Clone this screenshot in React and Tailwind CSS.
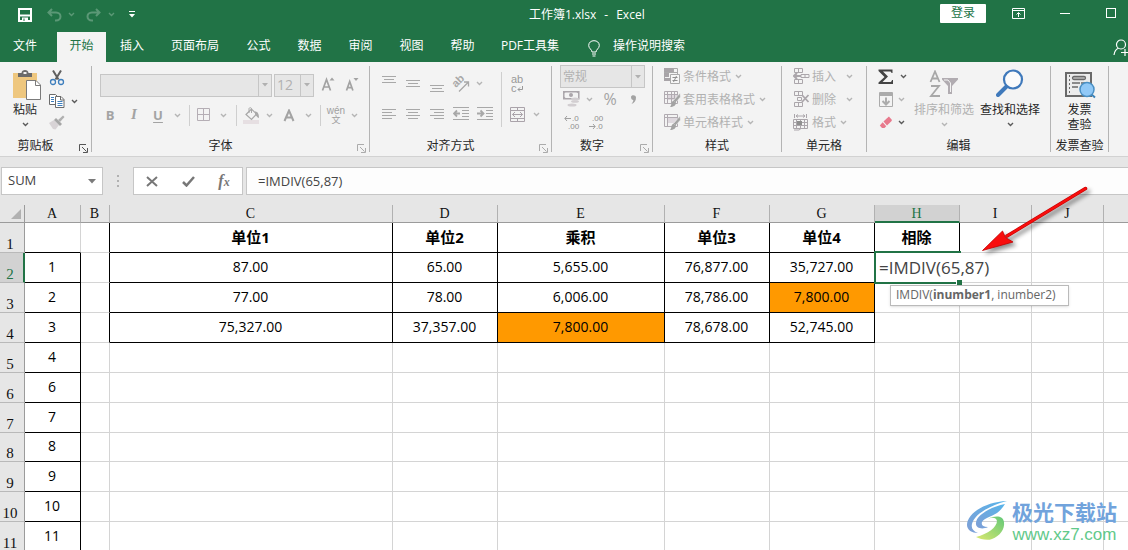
import { useState } from "react";
import clsx from "clsx";

const TABS = [
  { name: "文件", width: "w-[50px] mr-[7px]" },
  { name: "开始", width: "w-[49px] mr-px", active: true },
  { name: "插入", width: "w-[50px]" },
  { name: "页面布局", width: "w-[76px]" },
  { name: "公式", width: "w-[51px]" },
  { name: "数据", width: "w-[51px]" },
  { name: "审阅", width: "w-[51px]" },
  { name: "视图", width: "w-[51px]" },
  { name: "帮助", width: "w-[51px]" },
  { name: "PDF工具集", width: "w-[84px]" },
];

const COLUMNS = [
  { name: "A", width: "w-[56px]" },
  { name: "B", width: "w-[29px]" },
  { name: "C", width: "w-[283px]" },
  { name: "D", width: "w-[105px]" },
  { name: "E", width: "w-[167px]" },
  { name: "F", width: "w-[105px]" },
  { name: "G", width: "w-[105px]" },
  { name: "H", width: "w-[85px]" },
  { name: "I", width: "w-[72px]" },
  { name: "J", width: "w-[72px]" },
  { name: "", width: "" },
];

const ROWS = [
  ["", "", "单位1", "单位2", "乘积", "单位3", "单位4", "相除"],
  ["1", "", "87.00", "65.00", "5,655.00", "76,877.00", "35,727.00"],
  ["2", "", "77.00", "78.00", "6,006.00", "78,786.00", "7,800.00"],
  ["3", "", "75,327.00", "37,357.00", "7,800.00", "78,678.00", "52,745.00"],
  ["4"],
  ["6"],
  ["7"],
  ["8"],
  ["9"],
  ["10"],
  ["11"],
];

const HIGHLIGHTED = ["G3", "E4"];

/* ---------- small pieces ---------- */

const Chevron = ({ dark, className }) => (
  <svg
    width="7"
    height="5"
    viewBox="0 0 7 5"
    fill="none"
    stroke={dark ? "#5a5a5a" : "#b5b5b5"}
    strokeWidth="1.4"
    className={clsx("shrink-0", className)}
  >
    <path d="M1 1l2.500 2.500L6 1" />
  </svg>
);

const IconButton = ({ label, className, children, enabled }) => (
  <button
    type="button"
    aria-label={label}
    disabled={!enabled}
    className={clsx("flex h-6 shrink-0 items-center justify-center", className)}
  >
    {children}
  </button>
);

const More = ({ className = "w-[14px]", dark }) => (
  <IconButton label="更多" className={className} enabled={dark}>
    <Chevron dark={dark} />
  </IconButton>
);

const Divider = ({ className }) => (
  <div className={clsx("flex h-[21px] shrink-0 justify-center", className)}>
    <div className="w-px bg-[#cfcfcf]" />
  </div>
);

const Combo = ({ label, value, className }) => (
  <div className={clsx("flex h-[23px] shrink-0 border border-[#c6c6c6] bg-[#e6e6e6]", className)}>
    <select
      aria-label={label}
      disabled
      className="min-w-0 flex-1 appearance-none pl-0.5 leading-5 text-[#b1b1b1] opacity-100"
    >
      <option>{value}</option>
    </select>
    <div className="flex w-[13px] items-center justify-center border-l border-[#c6c6c6]">
      <svg width="6" height="4" viewBox="0 0 6 4" fill="#b1b1b1">
        <path d="M0 0h6L3 3.500z" />
      </svg>
    </div>
  </div>
);

const Group = ({ name, launcher, darkLauncher, className, children }) => (
  <section
    aria-label={name}
    className={clsx("relative flex h-[94px] shrink-0 flex-col pr-px", className)}
  >
    <div className="h-[76px]">{children}</div>
    <div className="flex h-4 items-center">
      <h2 className="flex-1 text-center text-xs leading-4 text-[#262626]">{name}</h2>
      {launcher && (
        <button type="button" aria-label={name + "设置"} className="flex w-5 items-end justify-end pt-[4px] pr-[3px]">
          <svg width="9" height="9" viewBox="0 0 9 9" fill="none" stroke={darkLauncher ? "#555" : "#ababab"}>
            <path d="M.5 7V.5H7M3 3l4.500 4.500M8.500 4v4.500H4" />
          </svg>
        </button>
      )}
    </div>
    <div className="absolute top-1 right-0 h-[86px] w-px bg-[#b4b4b4]" />
  </section>
);

/* ---------- icons ---------- */

const PasteIcon = () => (
  <svg width="30" height="32" viewBox="0 0 30 32" className="ml-1 shrink-0">
    <path d="M1 4h24v25H1z" fill="#eec77f" />
    <path d="M6 8V4h3.500c0-4 7-4 7 0H20v4z" fill="#6b6b6b" />
    <rect x="11.500" y="3" width="3" height="2" fill="#f3f3f3" />
    <path d="M14.500 11.500h9.500l4.500 4.500v14.500h-14z" fill="#fff" stroke="#7b7b7b" />
    <path d="M23.500 11.500v5h5" fill="none" stroke="#7b7b7b" />
  </svg>
);

const CutIcon = () => (
  <svg width="16" height="16" viewBox="0 0 16 16" fill="none">
    <path d="M4 .5l5.500 9M12 .5l-5.500 9" stroke="#5f5f5f" strokeWidth="2" />
    <circle cx="4" cy="12" r="2.500" stroke="#3d7ebd" strokeWidth="1.300" />
    <circle cx="12" cy="12" r="2.500" stroke="#3d7ebd" strokeWidth="1.300" />
  </svg>
);

const CopyIcon = () => (
  <svg width="16" height="16" viewBox="0 0 16 16" fill="none">
    <path d="M.5 1.500h6l2 2v8h-8z" fill="#fff" stroke="#6b6b6b" />
    <path d="M2 4.500h3M2 6.500h3M2 8.500h3" stroke="#3d7ebd" />
    <path d="M6.500 3.500h5.500l3 3v8H6.500z" fill="#fff" stroke="#6b6b6b" />
    <path d="M11.500 3.500V7H15" stroke="#6b6b6b" />
    <path d="M8.500 8.500h5M8.500 10.500h5M8.500 12.500h5" stroke="#3d7ebd" />
  </svg>
);

const PainterIcon = () => (
  <svg width="16" height="16" viewBox="0 0 16 16">
    <path d="M0 8l5-3 5 5-3.500 4.500-2.500-.5z" fill="#d8d3d6" />
    <path d="M5 5l2-2 6 6-2 2z" fill="#a6a6a6" />
    <path d="M9 5l5-4.500L15.500 2 11 7z" fill="#b0b0b0" />
  </svg>
);

const GrowFontIcon = ({ shrink }) => (
  <svg width="14" height="16" viewBox="0 0 14 16" fill="none">
    {shrink ? (
      <path d="M1.500 13.500l3.200-9 3.200 9M2.700 10.700h4" stroke="#a3a3a3" strokeWidth="1.700" />
    ) : (
      <path d="M1.500 13.500l4-11 4 11M3 10h5" stroke="#a3a3a3" strokeWidth="1.700" />
    )}
    <path d={shrink ? "M8.500 1h5L11 4z" : "M8.500 3.500h5L11 .5z"} fill="#a3a3a3" />
  </svg>
);

const BordersIcon = () => (
  <svg width="14" height="14" viewBox="0 0 14 14" fill="none" stroke="#b5aeb5">
    <path d="M.5.5h12v12H.5zM6.500.5v12M.5 6.500h12" />
  </svg>
);

const FillIcon = () => (
  <svg width="17" height="17" viewBox="0 0 17 17" fill="none">
    <path d="M0 13h16v4H0z" fill="#e6dfe2" />
    <path d="M3 7.500L8.500 2l5 5-5 5.500z" stroke="#a8a8a8" strokeWidth="1.200" />
    <path d="M6 6V1.500c0-1 2.500-1 2.500 0V6" stroke="#a8a8a8" />
    <path d="M12 4.500c2.500 0 4 2 4 6.500-2-.5-2.500-2-4-4z" fill="#a8a8a8" />
  </svg>
);

const FontColorIcon = () => (
  <svg width="12" height="13" viewBox="0 0 12 13" fill="none" stroke="#a3a3a3" strokeWidth="2">
    <path d="M1.500 12L6 1.500 10.500 12M3 8.500h6" />
  </svg>
);

// line lists are [x, width] pairs stacked three pixels apart
const ALIGNMENTS = {
  even: [[0, 14], [2, 10], [0, 14]],
  left: [[0, 14], [0, 10], [0, 14], [0, 10]],
  center: [[0, 14], [2, 10], [0, 14], [2, 10]],
  right: [[0, 14], [4, 10], [0, 14], [4, 10]],
};

const LinesIcon = ({ kind, className }) => {
  const lines = ALIGNMENTS[kind];
  return (
    <svg width="14" height={lines.length * 3} className={className} fill="#a8a8a8">
      {lines.map(([x, w], i) => (
        <rect key={i} x={x} y={i * 3 + 1} width={w} height="1" />
      ))}
    </svg>
  );
};

const IndentIcon = ({ right }) => (
  <svg width="16" height="14" viewBox="0 0 16 14" fill="none" stroke="#a8a8a8">
    <path d="M0 .5h16M9 3.500h7M9 6.500h7M9 9.500h7M0 12.500h16" />
    {right ? (
      <path d="M0 6.500h6M3.500 3.500l3 3-3 3" strokeWidth="1.800" />
    ) : (
      <path d="M7 6.500H1M4 3.500l-3 3 3 3" strokeWidth="1.800" />
    )}
  </svg>
);

const OrientationIcon = () => (
  <svg width="20" height="20" viewBox="0 0 20 20" fill="none" stroke="#a8a8a8" className="overflow-visible">
    <text
      x="5"
      y="14"
      fontSize="11"
      fontWeight="bold"
      transform="rotate(-45 5 14)"
      fill="#a8a8a8"
      stroke="none"
      fontFamily="Liberation Sans"
    >
      ab
    </text>
    <path d="M8 17.500L17 8.500M13 8h4.500v4.500" strokeWidth="1.300" />
  </svg>
);

const WrapIcon = () => (
  <svg width="14" height="20" viewBox="0 0 14 20" fill="none" className="overflow-visible">
    <text fontSize="11" fill="#999" fontFamily="Liberation Sans">
      <tspan x="1" y="9">ab</tspan>
      <tspan x="1" y="18">c</tspan>
    </text>
    <path d="M12.500 12v3.500H8M10 13.500l-2 2 2 2" stroke="#999" />
  </svg>
);

const MergeIcon = () => (
  <svg width="15" height="15" viewBox="0 0 15 15" fill="none" stroke="#aaa3aa">
    <path d="M.5.5h14v14H.5zM.5 3.500h14M.5 11.500h14M7.500.5v3M7.500 11.500v3" />
    <path d="M2.500 7.500h10M5 5L2.500 7.500 5 10M10 5l2.500 2.500L10 10" />
  </svg>
);

const MoneyIcon = () => (
  <svg width="17" height="16" viewBox="0 0 17 16">
    <path d="M.8.8h15v7H.8z" fill="#f3f3f3" stroke="#aba6ab" strokeWidth="1.500" />
    <path d="M0 0h4L0 3zM16 0h-4l4 3zM0 8h4L0 5z" fill="#aba6ab" />
    <circle cx="8" cy="4" r="2" fill="#aba6ab" />
    <ellipse cx="12" cy="8" rx="4" ry="1.500" fill="#d2ced1" />
    <ellipse cx="12" cy="10.500" rx="4" ry="1.300" fill="#d2ced1" />
    <ellipse cx="9" cy="14" rx="4.500" ry="1.500" fill="#d2ced1" />
  </svg>
);

const DecimalIcon = ({ increase }) => (
  <svg width="17" height="16" viewBox="0 0 17 16" fill="none" className="overflow-visible">
    <text fontSize="8" fill="#8f8f8f" fontFamily="Liberation Sans">
      <tspan x={increase ? 8 : 4} y="7">{increase ? ".0" : ".00"}</tspan>
      <tspan x={increase ? 4 : 8} y="15">{increase ? ".00" : ".0"}</tspan>
    </text>
    <path d={increase ? "M7 4.500H1M3 2L.8 4.500 3 7" : "M1 12.500h6M5 10l2.200 2.500L5 15"} stroke="#a0a0a0" />
  </svg>
);

const ConditionalIcon = () => (
  <svg width="17" height="17" viewBox="0 0 17 17" fill="none">
    <path d="M.5.5h13v12H.5z" fill="#f3f3f3" stroke="#aaa" />
    <path d="M0 0h9v4H0zM0 5h5v4H0zM0 10h6v3H0z" fill="#a8a4a8" />
    <path d="M9.500.5v4M0 4.500h13" stroke="#aaa" />
    <path d="M6.500 6.500h9v9h-9z" fill="#f6f6f6" stroke="#aaa" />
    <path d="M8.500 9.500h5M8.500 12.500h5M12.500 8l-3 6" stroke="#8f8f8f" />
  </svg>
);

const TableStyleIcon = ({ cell }) => (
  <svg width="17" height="17" viewBox="0 0 17 17" fill="none">
    <path d="M4 4h9v5H4z" fill="#ded8de" />
    <path d="M.5.5h13v12H.5zM.5 3.500h13M3.500.5v12" stroke="#b1abb1" />
    {!cell && <path d="M.5 7.500h13M7.500.5v12M10.500.5v12" stroke="#b1abb1" />}
    <path d="M16 2l.5 4-5 5.500-2-2z" fill="#a3a3a3" stroke="#f3f3f3" strokeWidth=".6" />
    <path d="M9.500 9.500l2.500 2c0 3-2.500 4.500-6 4.500 2-1.500.5-5 3.500-6.500z" fill="#a3a3a3" />
  </svg>
);

const InsertCellsIcon = () => (
  <svg width="17" height="17" viewBox="0 0 17 17" fill="none" stroke="#aba6ab">
    <path d="M1.500.5h8v4h-8zM5.500.5v4M1.500 11.500h8v4h-8zM5.500 11.500v4" />
    <path d="M8 6.500h8v3H8zM12 6.500v3" />
    <path d="M8 8H1M4 5L1 8l3 3" strokeWidth="2" />
  </svg>
);

const DeleteCellsIcon = () => (
  <svg width="17" height="17" viewBox="0 0 17 17" fill="none" stroke="#aba6ab">
    <path d="M1.500.5h8v4h-8zM5.500.5v4M1.500 11.500h8v4h-8zM5.500 11.500v4M4.500 6.500h4v3h-4z" />
    <path d="M9 4l6.500 7M15.500 4L9 11" strokeWidth="1.800" />
  </svg>
);

const FormatCellsIcon = () => (
  <svg width="16" height="17" viewBox="0 0 16 17" fill="none" stroke="#aba6ab">
    <path d="M1.500 0v4M13.500 0v4M3 2h9M5 .5L3 2l2 1.500M10 .5L12 2l-2 1.500" />
    <path d="M.5 5.500h14v9H.5zM.5 8.500h14M.5 11.500h14M3.500 5.500v9M7.500 5.500v9M11.500 5.500v9" />
    <path d="M4 7h5v4H4z" fill="#8f8f8f" stroke="none" />
    <path d="M1 16h5l2-1.500" />
  </svg>
);

const SigmaIcon = () => (
  <svg width="16" height="16" viewBox="0 0 16 16" fill="#444">
    <path d="M.5.5h14V4h-1c-.3-1.200-.8-1.500-2-1.500H5L10 7.500 4.500 13H12c1.200 0 1.600-.6 2-2h1v4H.5v-1.500L6.500 8 .5 2z" />
  </svg>
);

const FillDownIcon = () => (
  <svg width="14" height="16" viewBox="0 0 14 16" fill="none" stroke="#ababab">
    <path d="M.5.5h13v14H.5z" />
    <path d="M0 1h14v3H0z" fill="#ababab" stroke="none" />
    <path d="M7 5.500v7M3.500 9L7 12.500 10.500 9" strokeWidth="2" />
  </svg>
);

const EraserIcon = () => (
  <svg width="14" height="14" viewBox="0 0 14 14">
    <path d="M4.500 5.500L9 1.200c.6-.5 1-.5 1.600 0l2 2.300c.4.500.4 1 0 1.500L8 9.500z" fill="#e8798c" />
    <path d="M3.700 6.300l3.500 4L5.500 12H3L.8 9.500z" fill="#e8798c" />
  </svg>
);

const SortFilterIcon = () => (
  <svg width="30" height="28" viewBox="0 0 30 28" fill="none" stroke="#a8a8a8">
    <path d="M1.500 12L6 1.500 10.500 12M3 8.500h6" strokeWidth="1.800" />
    <path d="M2 16h8L2 26h9" strokeWidth="1.800" />
    <path d="M13 8h16v1.500l-6 6.500v8h-4v-8l-6-6.500z" fill="#b1acb1" stroke="none" />
    <path d="M15 10h4l2.500 3v9" stroke="#f3f3f3" />
  </svg>
);

const SearchIcon = () => (
  <svg width="28" height="28" viewBox="0 0 28 28" fill="none">
    <path d="M2 26L11 17" stroke="#3f79bb" strokeWidth="4" strokeLinecap="round" />
    <circle cx="17" cy="10.500" r="9" fill="#fbfbfb" stroke="#3f79bb" strokeWidth="2.200" />
  </svg>
);

const InvoiceIcon = () => (
  <svg width="32" height="28" viewBox="0 0 32 28" fill="none">
    <path d="M2 2h25v23H2z" fill="#ececec" stroke="#6a6a6a" strokeWidth="2" />
    <path d="M5.500 4v19" stroke="#6a6a6a" strokeDasharray="2 2" />
    <rect x="8.500" y="5.500" width="13" height="3" rx="1.500" fill="#bbb" stroke="#6a6a6a" strokeWidth="1.300" />
    <path d="M8 12h8M8 16h6M17 12h4" stroke="#6a6a6a" strokeWidth="1.300" />
    <path d="M27 23l4 3.500" stroke="#3c83b8" strokeWidth="2" />
    <circle cx="23" cy="18.500" r="7" fill="#91c9f7" stroke="#4a90c4" strokeWidth="1.500" />
  </svg>
);

/* ---------- title bar and tabs ---------- */

const TitleBar = () => (
  <header className="flex h-8 items-center text-xs text-white">
    <div className="flex w-[529px] shrink-0 items-center pb-[3px] pl-[13px]">
      <IconButton label="保存" enabled className="w-6">
        <svg width="14" height="14" viewBox="0 0 14 14" fill="none" stroke="#fff">
          <path d="M1 1h12v12H1z" strokeWidth="2" />
          <path d="M2 7.500h10" strokeWidth="2" />
          <path d="M4 9.500h6V13H4z" fill="#fff" stroke="none" />
          <path d="M5.500 10.500h1V13h-1z" fill="#217346" stroke="none" />
        </svg>
      </IconButton>
      <IconButton label="撤消" className="ml-[5px] w-6">
        <svg width="15" height="14" viewBox="0 0 15 14" fill="none" stroke="#5b9876" strokeWidth="2">
          <path d="M5 1L1.500 4.500 5 8M2 4.500h7c6 0 6 8 0 8H8" />
        </svg>
      </IconButton>
      <svg width="7" height="5" viewBox="0 0 7 5" fill="none" stroke="#5b9876" strokeWidth="1.400" className="ml-0.5">
        <path d="M1 1l2.500 2.500L6 1" />
      </svg>
      <IconButton label="恢复" className="ml-[6px] w-6">
        <svg width="15" height="14" viewBox="0 0 15 14" fill="none" stroke="#5b9876" strokeWidth="2">
          <path d="M10 1l3.500 3.500L10 8M13 4.500H6c-6 0-6 8 0 8h1" />
        </svg>
      </IconButton>
      <svg width="7" height="5" viewBox="0 0 7 5" fill="none" stroke="#5b9876" strokeWidth="1.400" className="ml-[3px]">
        <path d="M1 1l2.500 2.500L6 1" />
      </svg>
      <IconButton label="自定义快速访问工具栏" enabled className="ml-[7px] w-5">
        <svg width="6" height="7" viewBox="0 0 6 7" fill="#fff">
          <path d="M0 0h6v1H0zM0 3h6L3 6.500z" />
        </svg>
      </IconButton>
    </div>
    <h1 className="pb-0.5 whitespace-nowrap">
      工作簿1.xlsx<span className="mx-2">-</span>Excel
    </h1>
    <div className="ml-auto flex items-center pr-3 pb-[6px]">
      <button type="button" className="h-[19px] w-[46px] rounded-[1px] bg-white text-xs leading-4 text-[#217346]">
        登录
      </button>
      <button type="button" aria-label="功能区显示选项" className="ml-[26px]">
        <svg width="13" height="11" viewBox="0 0 13 11" fill="none" stroke="#fff">
          <path d="M.5.5h12v10H.5zM.5 2.500h12M6.500 9V5M4.500 6.500l2-2 2 2" />
        </svg>
      </button>
      <button type="button" aria-label="最小化" className="ml-[35px] flex h-4 w-[10px] items-center">
        <span className="h-px w-full bg-white" />
      </button>
      <button type="button" aria-label="最大化" className="ml-9 size-[10px] border border-white" />
    </div>
  </header>
);

const TabBar = () => (
  <nav className="flex h-[30px] items-stretch text-xs text-white">
    {TABS.map((tab) => (
      <button
        key={tab.name}
        type="button"
        className={clsx(
          "shrink-0 pb-0.5 text-center whitespace-nowrap",
          tab.width,
          tab.active && "bg-[#f3f3f3] text-[#217346]"
        )}
      >
        {tab.name}
      </button>
    ))}
    <button type="button" className="ml-4 flex shrink-0 items-center gap-[13px] pb-0.5 whitespace-nowrap">
      <svg width="12" height="17" viewBox="0 0 12 17" fill="none" stroke="#fff" className="mt-1">
        <path d="M4 12c0-2.500-3.300-3.500-3.300-6.500C.7 2.500 3 .7 6 .7s5.300 1.800 5.300 4.800c0 3-3.300 4-3.300 6.500zM4 14h4M4.500 16h3" />
      </svg>
      操作说明搜索
    </button>
    <button type="button" aria-label="共享" className="ml-auto self-center">
      <svg width="16" height="17" viewBox="0 0 16 17" fill="none" stroke="#fff" strokeWidth="1.200">
        <circle cx="9" cy="5.500" r="4.500" />
        <path d="M2 16c.5-4 2-6 4.500-6.800M9 13.500h7M13 10v7" />
      </svg>
    </button>
  </nav>
);

/* ---------- ribbon ---------- */

const MenuRow = ({ icon, label, textWidth }) => (
  <button
    type="button"
    disabled
    className="flex h-[23px] items-center text-xs whitespace-nowrap text-[#b1b1b1]"
  >
    <span className="w-[19px]">{icon}</span>
    <span className={textWidth}>{label}</span>
    <Chevron className="ml-1" />
  </button>
);

const Ribbon = () => (
  <div className="flex h-[95px] overflow-hidden border-b border-[#d2d2d2] bg-[#f3f3f3]">
    <Group name="剪贴板" launcher darkLauncher className="w-[92px]">
      <div className="flex pl-2">
        <button type="button" className="flex w-[34px] flex-col items-center pt-[7px] text-xs leading-4 text-[#262626]">
          <PasteIcon />
          <span className="pt-px">粘贴</span>
          <Chevron dark className="mt-1" />
        </button>
        <div className="ml-[7px] flex flex-col pt-[5px]">
          <button type="button" aria-label="剪切" className="h-[22px]">
            <CutIcon />
          </button>
          <button type="button" aria-label="复制" className="flex h-6 items-center">
            <CopyIcon />
            <Chevron dark className="ml-[6px]" />
          </button>
          <button type="button" aria-label="格式刷" disabled className="h-5">
            <PainterIcon />
          </button>
        </div>
      </div>
    </Group>

    <Group name="字体" launcher className="w-[278px]">
      <div className="flex items-center pt-[11px] pl-2">
        <Combo label="字体" value="" className="w-[172px] text-sm" />
        <Combo label="字号" value="12" className="ml-0.5 w-10 text-sm" />
        <IconButton label="增大字号" className="ml-[2px] w-6">
          <GrowFontIcon />
        </IconButton>
        <IconButton label="减小字号" className="w-6">
          <GrowFontIcon shrink />
        </IconButton>
      </div>
      <div className="flex items-center pt-[6px] pl-[6px] text-sm text-[#a3a3a3]">
        <IconButton label="加粗" className="w-6 text-[13px] font-bold">
          B
        </IconButton>
        <IconButton label="倾斜" className="w-6 font-['Liberation_Serif'] text-[15px] font-bold italic">
          I
        </IconButton>
        <IconButton label="下划线" className="w-6 text-[13px] font-bold underline underline-offset-2">
          U
        </IconButton>
        <More />
        <Divider className="w-[10px]" />
        <IconButton label="边框" className="w-5">
          <BordersIcon />
        </IconButton>
        <More className="w-[18px]" />
        <Divider className="w-2" />
        <IconButton label="填充颜色" className="w-[22px]">
          <FillIcon />
        </IconButton>
        <More />
        <IconButton label="字体颜色" className="w-[25px]">
          <FontColorIcon />
        </IconButton>
        <More />
        <Divider className="w-[10px]" />
        <IconButton label="拼音" className="w-[22px]">
          <svg width="18" height="20" viewBox="0 0 18 20" fill="#a0a0a0" className="overflow-visible">
            <text fontFamily="Liberation Sans, Noto Sans CJK SC" textAnchor="middle">
              <tspan x="9" y="9" fontSize="10">wén</tspan>
              <tspan x="9" y="18" fontSize="9">文</tspan>
            </text>
          </svg>
        </IconButton>
        <More />
      </div>
    </Group>

    <Group name="对齐方式" launcher className="w-[182px]">
      <div className="flex pl-[7px]">
        <div className="w-[120px]">
          <div className="flex h-[31px] items-center pt-3">
            <IconButton label="顶端对齐" className="w-6 pb-[8px]">
              <LinesIcon kind="even" />
            </IconButton>
            <IconButton label="垂直居中" className="w-6">
              <LinesIcon kind="even" />
            </IconButton>
            <IconButton label="底端对齐" className="w-6 pt-[10px]">
              <LinesIcon kind="even" />
            </IconButton>
            <IconButton label="方向" className="w-6">
              <OrientationIcon />
            </IconButton>
            <More className="w-3" />
          </div>
          <div className="flex items-center pt-[9px]">
            <IconButton label="左对齐" className="w-6">
              <LinesIcon kind="left" />
            </IconButton>
            <IconButton label="居中" className="w-6">
              <LinesIcon kind="center" />
            </IconButton>
            <IconButton label="右对齐" className="w-6">
              <LinesIcon kind="right" />
            </IconButton>
            <IconButton label="减少缩进量" className="w-6">
              <IndentIcon />
            </IconButton>
            <IconButton label="增加缩进量" className="w-6">
              <IndentIcon right />
            </IconButton>
          </div>
        </div>
        <div className="mt-[10px] ml-1 h-[55px] w-px bg-[#cfcfcf]" />
        <div className="pl-[3px]">
          <div className="flex h-[31px] items-center pt-3">
            <IconButton label="自动换行" className="w-6">
              <WrapIcon />
            </IconButton>
          </div>
          <div className="flex items-center pt-[9px]">
            <IconButton label="合并后居中" className="w-6">
              <MergeIcon />
            </IconButton>
            <More />
          </div>
        </div>
      </div>
    </Group>

    <Group name="数字" launcher className="w-[101px]">
      <div className="flex flex-col pt-[3px] pl-2">
        <Combo label="数字格式" value="常规" className="w-[85px] text-xs" />
        <div className="flex h-[22px] items-center text-[#a3a3a3]">
          <IconButton label="会计数字格式" className="w-[22px]">
            <MoneyIcon />
          </IconButton>
          <More />
          <IconButton label="百分比样式" className="w-[28px] text-base">
            %
          </IconButton>
          <IconButton label="千位分隔样式" className="w-[18px]">
            <svg width="5" height="9" viewBox="0 0 5 9" fill="#a3a3a3">
              <path d="M0 2c0-2.500 5-2.500 5 .5C5 5.500 3.500 8 .5 9c1-1.500 1.800-2.500 1.800-4C1 5 0 4 0 2z" />
            </svg>
          </IconButton>
        </div>
        <div className="flex items-center">
          <IconButton label="增加小数位数" className="w-6">
            <DecimalIcon increase />
          </IconButton>
          <IconButton label="减少小数位数" className="w-6">
            <DecimalIcon />
          </IconButton>
        </div>
      </div>
    </Group>

    <Group name="样式" className="w-[129px]">
      <div className="flex flex-col pt-[3px] pl-[11px]">
        <MenuRow icon={<ConditionalIcon />} label="条件格式" />
        <MenuRow icon={<TableStyleIcon />} label="套用表格格式" />
        <MenuRow icon={<TableStyleIcon cell />} label="单元格样式" />
      </div>
    </Group>

    <Group name="单元格" className="w-[85px]">
      <div className="flex flex-col pt-[3px] pl-[11px]">
        <MenuRow icon={<InsertCellsIcon />} label="插入" textWidth="w-[30px] text-left" />
        <MenuRow icon={<DeleteCellsIcon />} label="删除" textWidth="w-[30px] text-left" />
        <MenuRow icon={<FormatCellsIcon />} label="格式" />
      </div>
    </Group>

    <Group name="编辑" className="w-[184px]">
      <div className="flex pl-[11px] text-xs leading-4">
        <div className="flex w-8 shrink-0 flex-col pt-[3px]">
          <button type="button" aria-label="自动求和" className="flex h-[23px] items-center">
            <span className="w-[22px]">
              <SigmaIcon />
            </span>
            <Chevron dark />
          </button>
          <button type="button" aria-label="填充" disabled className="flex h-[23px] items-center">
            <span className="w-5 pl-px">
              <FillDownIcon />
            </span>
            <Chevron />
          </button>
          <button type="button" aria-label="清除" className="flex h-[23px] items-center">
            <span className="w-5 pl-px">
              <EraserIcon />
            </span>
            <Chevron dark />
          </button>
        </div>
        <button
          type="button"
          disabled
          className="ml-px flex w-[66px] shrink-0 flex-col items-center pt-2 whitespace-nowrap text-[#b1b1b1]"
        >
          <SortFilterIcon />
          <span className="pt-1">排序和筛选</span>
          <Chevron className="mt-1" />
        </button>
        <button
          type="button"
          className="flex w-[66px] shrink-0 flex-col items-center pt-[7px] whitespace-nowrap text-[#262626]"
        >
          <SearchIcon />
          <span className="pt-[5px]">查找和选择</span>
          <Chevron dark className="mt-1" />
        </button>
      </div>
    </Group>

    <Group name="发票查验" className="w-[58px]">
      <button type="button" className="flex w-full flex-col items-center pt-[9px] text-xs leading-[15px] text-[#262626]">
        <InvoiceIcon />
        <span className="pt-[3px]">发票</span>
        <span>查验</span>
      </button>
    </Group>
  </div>
);

/* ---------- formula bar ---------- */

const FormulaBar = ({ formula, setFormula }) => (
  <div className="flex h-12 shrink-0 items-start pt-[10px] pl-px text-[13px] text-[#444]">
    <div className="flex h-7 w-[102px] shrink-0 items-center border border-[#c6c6c6] bg-white">
      <input aria-label="名称框" defaultValue="SUM" className="min-w-0 flex-1 pl-[6px] outline-none" />
      <button type="button" aria-label="选择名称" className="px-[6px]">
        <svg width="8" height="5" viewBox="0 0 8 5" fill="#7a7a7a">
          <path d="M0 0h8L4 4.500z" />
        </svg>
      </button>
    </div>
    <div className="flex h-7 w-[30px] shrink-0 flex-col items-center justify-center gap-[3px]">
      <span className="size-0.5 bg-[#b1b1b1]" />
      <span className="size-0.5 bg-[#b1b1b1]" />
      <span className="size-0.5 bg-[#b1b1b1]" />
    </div>
    <div className="flex h-7 w-[110px] shrink-0 items-center border border-[#c6c6c6] bg-white">
      <IconButton label="取消" enabled className="w-9">
        <svg width="12" height="11" viewBox="0 0 12 11" fill="none" stroke="#777" strokeWidth="2">
          <path d="M1 1l10 9M11 1L1 10" />
        </svg>
      </IconButton>
      <IconButton label="输入" enabled className="w-9">
        <svg width="13" height="11" viewBox="0 0 13 11" fill="none" stroke="#777" strokeWidth="2.500">
          <path d="M1 6l3.500 3.500L12 1" />
        </svg>
      </IconButton>
      <IconButton
        label="插入函数"
        enabled
        className="w-9 font-['Liberation_Serif'] text-base leading-4 font-bold text-[#777] italic"
      >
        f<span className="pt-0.5 text-xs">x</span>
      </IconButton>
    </div>
    <input
      aria-label="编辑栏"
      value={formula}
      onChange={(e) => setFormula(e.target.value)}
      className="ml-[3px] h-7 min-w-0 flex-1 border border-r-0 border-[#c6c6c6] bg-[#fdfdfd] pl-[11px] outline-none"
    />
  </div>
);

/* ---------- sheet ---------- */

const CellEditor = ({ formula, setFormula }) => (
  <>
    <div className="absolute -top-0.5 -left-px z-10 h-[33px] w-[87px] border-y-2 border-l-2 border-[#217346]">
      <input
        aria-label="H2"
        value={formula}
        onChange={(e) => setFormula(e.target.value)}
        className="h-[29px] w-[154px] bg-white pl-[3px] text-[17px] text-[#444] outline-none"
      />
      <span className="absolute -right-px -bottom-[3px] size-[6px] border-t border-l border-white bg-[#217346]" />
    </div>
    <div className="absolute top-8 left-[15px] z-10 h-[21px] min-w-[179px] border border-[#bababa] bg-white px-[5px] text-xs leading-[18px] whitespace-nowrap text-[#666] shadow-sm">
      IMDIV(<b>inumber1</b>, inumber2)
    </div>
  </>
);

const cellBorder = (row, col) => {
  if (col === "A") return row === 1 ? "border-r-[#d4d4d4] border-b-black" : "border-black";
  if (col === "B") return row <= 4 ? "border-r-black border-b-[#d4d4d4]" : "border-[#d4d4d4]";
  if (col >= "C" && col <= "G" && row <= 4) return "border-black";
  if (col === "H" && row === 1) return "border-black";
  return "border-[#d4d4d4]";
};

const Sheet = ({ formula, setFormula }) => (
  <table className="w-full table-fixed border-separate border-spacing-0 bg-white text-center">
    <colgroup>
      <col className="w-[25px]" />
      {COLUMNS.map((col, i) => (
        <col key={i} className={col.width} />
      ))}
    </colgroup>
    <thead>
      <tr className="h-[18px] font-['Liberation_Serif','Noto_Sans_CJK_SC',serif] text-sm leading-4">
        <th className="h-[18px] border-r border-b border-[#9b9b9b] bg-[#e6e6e6] p-0">
          <svg width="10" height="10" viewBox="0 0 10 10" fill="#b1b1b1" className="ml-[11px]">
            <path d="M10 0v10H0z" />
          </svg>
        </th>
        {COLUMNS.map((col, i) => (
          <th
            key={i}
            scope="col"
            className={clsx(
              "p-0 pt-px pr-px font-normal",
              col.name && "border-r border-r-[#b1b1b1]",
              col.name === "H"
                ? "border-b-2 border-b-[#217346] bg-[#d2d2d2] leading-[15px] text-[#217346]"
                : "border-b border-b-[#9b9b9b] bg-[#e6e6e6] text-[#111]"
            )}
          >
            {col.name}
          </th>
        ))}
      </tr>
    </thead>
    <tbody>
      {ROWS.map((values, r) => {
        const row = r + 1;
        return (
          <tr key={row} className={row === 8 ? "h-[29px]" : "h-[30px]"}>
            <th
              scope="row"
              className={clsx(
                "border-b border-b-[#b9b9b9] p-0 align-bottom font-['Liberation_Serif'] text-[15px] leading-[15px] font-normal",
                row === 2
                  ? "border-r-2 border-r-[#217346] bg-[#d2d2d2] pr-[3px] text-[#217346]"
                  : "border-r border-r-[#9b9b9b] bg-[#e6e6e6] pr-1 text-[#111]"
              )}
            >
              {row}
            </th>
            {COLUMNS.map((col, c) => {
              const editing = col.name === "H" && row === 2;
              return (
                <td
                  key={c}
                  className={clsx(
                    "border-b p-0 pr-px pb-0.5 leading-5 text-black",
                    col.name && "border-r",
                    row === 1 ? "text-[15px] font-bold" : "text-sm",
                    cellBorder(row, col.name),
                    HIGHLIGHTED.includes(col.name + row) && "bg-[#ff9900]",
                    editing && "relative text-left"
                  )}
                >
                  {editing ? <CellEditor formula={formula} setFormula={setFormula} /> : values[c]}
                </td>
              );
            })}
          </tr>
        );
      })}
    </tbody>
  </table>
);

const Arrow = () => (
  <svg
    width="120"
    height="80"
    viewBox="0 0 120 80"
    className="pointer-events-none absolute top-[180px] left-[975px] z-20 drop-shadow-[3px_3px_2px_rgba(0,0,0,0.45)]"
  >
    <path d="M110.500 8.500L32 56" stroke="#c40000" strokeWidth="3.500" strokeLinecap="round" />
    <path d="M110.500 8.500L32 56" stroke="#f80d0d" strokeWidth="2.200" strokeLinecap="round" />
    <path d="M7.500 70.500L27.500 51l3 6.500 7.500 4.500z" fill="#f80d0d" stroke="#c40000" strokeWidth=".8" />
  </svg>
);

const Watermark = () => (
  <div className="pointer-events-none absolute right-[11px] bottom-1 z-20 flex items-center gap-1">
    <svg width="42" height="42" viewBox="0 0 42 42" className="mb-1">
      <defs>
        <linearGradient id="wm-blue" x1="1" y1="0" x2="0" y2="1">
          <stop offset="0" stopColor="#57b4ea" />
          <stop offset="1" stopColor="#7f9fd6" />
        </linearGradient>
        <linearGradient id="wm-green" x1="1" y1="0" x2="0" y2="1">
          <stop offset="0" stopColor="#62c878" />
          <stop offset="1" stopColor="#dbe86f" />
        </linearGradient>
      </defs>
      <path d="M41 1C18 2 1 14 1 25c0 5 5 8 11 8-5-2-7-5-6-9C8 15 22 6 41 1z" fill="url(#wm-blue)" />
      <path d="M39 4C24 7 9 16 10 24c0 4 6 6 12 3-5 0-7-2-6-5 2-4 9-5 15-9 4-3 6-6 8-9z" fill="url(#wm-blue)" />
      <path d="M22 19c4-2 8-2 9 2 0 6-9 13-21 16 4 2 11 4 16 2 8-3 13-10 12-17-1-6-8-7-16-3z" fill="url(#wm-green)" />
    </svg>
    <div className="text-center font-['Liberation_Sans','Noto_Sans_CJK_SC',sans-serif]">
      <p className="text-[21px] leading-6 font-bold text-[#71a3dc]">极光下载站</p>
      <p className="text-[17px] leading-5 text-[#62c98a]">www.xz7.com</p>
    </div>
  </div>
);

const App = () => {
  const [formula, setFormula] = useState("=IMDIV(65,87)");

  return (
    <div className="relative flex h-screen flex-col overflow-hidden bg-[#e6e6e6] font-['Open_Sans','Noto_Sans_CJK_SC',sans-serif]">
      <div className="shrink-0 bg-[#217346]">
        <TitleBar />
        <TabBar />
        <Ribbon />
      </div>
      <FormulaBar formula={formula} setFormula={setFormula} />
      <main className="min-h-0 flex-1 overflow-hidden">
        <Sheet formula={formula} setFormula={setFormula} />
      </main>
      <Arrow />
      <Watermark />
    </div>
  );
};

export default App;
